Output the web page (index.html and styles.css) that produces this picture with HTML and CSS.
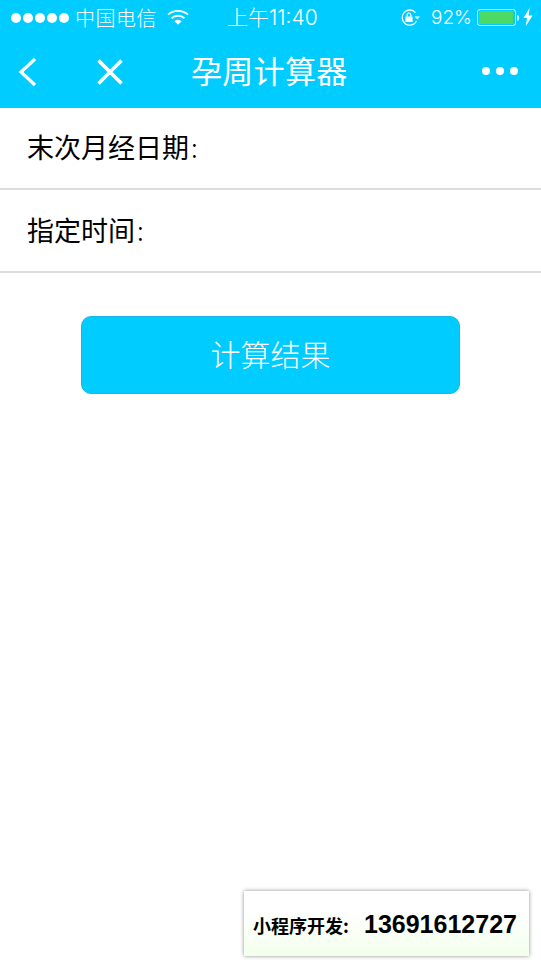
FILE: index.html
```html
<!DOCTYPE html>
<html lang="zh-CN">
<head>
<meta charset="utf-8">
<title>孕周计算器</title>
<link rel="stylesheet" href="styles.css">
</head>
<body>
<div class="page">
  <header class="header">
    <div class="status">
      <div class="status-left">
        <div class="dots"><i></i><i></i><i></i><i></i><i></i></div>
        <span class="carrier">中国电信</span>
        <svg class="wifi" width="22" height="16" viewBox="0 0 22 16"><path d="M1 5.6C6.6 .6 15.4 .6 21 5.6" fill="none" stroke="#fff" stroke-width="1.9"/><path d="M4.6 9.2C8.2 6 13.8 6 17.4 9.2" fill="none" stroke="#fff" stroke-width="1.9"/><path d="M7.4 12.2C9.6 10.4 12.4 10.4 14.6 12.2L11 15.8Z" fill="#fff"/></svg>
      </div>
      <span class="time">上午11:40</span>
      <div class="status-right">
        <svg class="lock" width="20" height="20" viewBox="0 0 20 20"><path d="M16.6 13A7.6 7.6 0 1 1 15.5 4.6" fill="none" stroke="#fff" stroke-width="1.3"/><path d="M14.6 8.4h5.4l-2.7 3.2z" fill="#fff"/><rect x="5.4" y="8.4" width="7.2" height="5.6" rx=".6" fill="#fff"/><path d="M7.2 8.4V7a1.8 1.8 0 0 1 3.6 0v1.4" fill="none" stroke="#fff" stroke-width="1.3"/></svg>
        <span class="pct">92%</span>
        <div class="battery"><div class="battery-fill"></div></div>
        <span class="nub"></span>
        <svg class="bolt" width="10" height="18" viewBox="0 0 10 18"><path d="M6.6 0L0.4 10h3.6L2.8 18 9.6 7.4H5.6Z" fill="#fff"/></svg>
      </div>
    </div>
    <nav class="nav">
      <svg class="back" width="20" height="30" viewBox="0 0 20 30"><path d="M17 2L3 15l14 13" fill="none" stroke="#fff" stroke-width="3.2"/></svg>
      <svg class="close" width="26" height="26" viewBox="0 0 26 26"><path d="M1.5 1.5l23 23M24.500 1.500l-23 23" fill="none" stroke="#fff" stroke-width="3.6"/></svg>
      <h1 class="title">孕周计算器</h1>
      <div class="more"><i></i><i></i><i></i></div>
    </nav>
  </header>
  <main>
    <div class="row row-a">末次月经日期<span class="colon">:</span></div>
    <div class="row row-b">指定时间<span class="colon">:</span></div>
    <button class="calc" type="button">计算结果</button>
  </main>
  <aside class="ad"><span class="ad-label">小程序开发:</span><span class="ad-num">13691612727</span></aside>
</div>
</body>
</html>
```
FILE: styles.css
```css
* { box-sizing: border-box; }
html, body { margin: 0; padding: 0; background: #fff; }
body { font-family: "Noto Sans CJK SC", "Liberation Sans", sans-serif; }
.page { position: relative; width: 541px; height: 960px; overflow: hidden; }
.header { background: #00ccff; height: 108px; color: #fff; }
.status { height: 36px; display: flex; align-items: center; padding: 0 0 1px 11px; }
.status-left { display: flex; align-items: center; width: 216px; }
.dots { display: flex; gap: 2px; margin-top: 1px; }
.dots i { display: block; width: 10px; height: 10px; border-radius: 50%; background: #fff; }
.carrier { font-size: 20px; line-height: 34px; margin-left: 6px; font-weight: 300; letter-spacing: .5px; }
.wifi { margin-left: 10px; margin-top: -1px; }
.time { font-size: 21px; line-height: 34px; font-family: "Inter", "Noto Sans CJK SC", sans-serif; font-weight: 300; width: 173px; }
.status-right { display: flex; align-items: center; }
.lock { margin-right: 11px; }
.pct { font-size: 19px; font-family: "Inter", "Liberation Sans", sans-serif; font-weight: 300; margin-right: 5px; line-height: 34px; }
.battery { width: 39px; height: 17px; border: 1px solid #d8f6ff; border-radius: 3px; padding: 1px; }
.battery-fill { width: 34px; height: 13px; background: #4cd964; }
.nub { width: 2px; height: 6px; background: #d8f6ff; margin-left: 1px; border-radius: 0 2px 2px 0; }
.bolt { margin-left: 4px; margin-top: -1px; }
.nav { height: 72px; display: flex; align-items: center; }
.back { margin-left: 18px; }
.close { margin-left: 59px; margin-top: -1px; }
.title { font-size: 31px; font-weight: 400; margin: 0 0 0 68px; line-height: 68px; height: 72px; letter-spacing: .3px; }
.more { display: flex; gap: 6px; margin-left: auto; margin-right: 23px; margin-top: -2px; }
.more i { display: block; width: 8px; height: 8px; border-radius: 50%; background: #fff; }
.row { border-bottom: 2px solid #dcdcdc; padding: 0 0 3px 27px; font-size: 27px; color: #000; display: flex; align-items: center; }
.colon { margin-left: 2px; font-weight: 300; }
.row-a { height: 82px; }
.row-b { height: 83px; }
.calc { display: block; width: 379px; height: 78px; margin: 43px 0 0 81px; background: #00ccff; border: 1px solid #1ab8e0; border-radius: 10px; color: #fff; font: 300 30px "Noto Sans CJK SC", sans-serif; padding: 0 0 4px; }
.ad { position: absolute; left: 244px; top: 891px; width: 285px; height: 65px; background: linear-gradient(#fff 30%, #f3ffec); box-shadow: 0 0 4px rgba(0,0,0,.45); display: flex; align-items: center; color: #000; padding: 2px 0 0 9px; }
.ad-label { font-size: 18px; font-weight: 700; width: 111px; }
.ad-num { font: 700 25px "Liberation Sans", sans-serif; }
```
